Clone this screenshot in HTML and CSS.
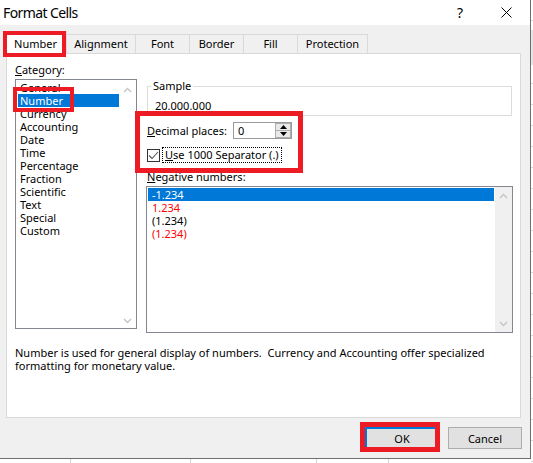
FILE: index.html
```html
<!DOCTYPE html>
<html>
<head>
<meta charset="utf-8">
<link rel="stylesheet" href="styles.css">
</head>
<body>
<div class="screen">
  <div class="dialog">
    <div class="titlebar">
      <span class="title">Format Cells</span>
      <span class="help">?</span>
      <span class="close"><svg width="11" height="11" viewBox="0 0 11 11"><path d="M0.5 0.5 L10.5 10.5 M10.5 0.5 L0.5 10.5" stroke="#000" stroke-width="1" fill="none"/></svg></span>
    </div>
    <div class="tabs">
      <div class="tab active">Number</div>
      <div class="tab">Alignment</div>
      <div class="tab">Font</div>
      <div class="tab">Border</div>
      <div class="tab">Fill</div>
      <div class="tab">Protection</div>
    </div>
    <div class="panel">
      <div class="cols">
        <div class="catcol">
          <div class="label"><u>C</u>ategory:</div>
          <div class="listbox cat">
            <ul class="items">
              <li>General</li>
              <li class="sel">Number</li>
              <li>Currency</li>
              <li>Accounting</li>
              <li>Date</li>
              <li>Time</li>
              <li>Percentage</li>
              <li>Fraction</li>
              <li>Scientific</li>
              <li>Text</li>
              <li>Special</li>
              <li>Custom</li>
            </ul>
            <div class="vscroll plain">
              <svg width="9" height="6" viewBox="0 0 9 6"><path d="M1 5 L4.5 1.5 L8 5" stroke="#c4c4c4" stroke-width="1.4" fill="none"/></svg>
              <svg width="9" height="6" viewBox="0 0 9 6"><path d="M1 1 L4.5 4.5 L8 1" stroke="#c4c4c4" stroke-width="1.4" fill="none"/></svg>
            </div>
          </div>
        </div>
        <div class="rightcol">
          <fieldset class="sample">
            <legend>Sample</legend>
            <div class="sampleval">20.000.000</div>
          </fieldset>
          <div class="decrow">
            <span class="declabel"><u>D</u>ecimal places:</span>
            <div class="spin">
              <span class="spinval">0</span>
              <div class="spinbtns">
                <span class="sb"><svg width="7" height="4" viewBox="0 0 7 4"><path d="M0 4 L3.5 0 L7 4 Z" fill="#000"/></svg></span>
                <span class="sb"><svg width="7" height="4" viewBox="0 0 7 4"><path d="M0 0 L3.5 4 L7 0 Z" fill="#000"/></svg></span>
              </div>
            </div>
          </div>
          <div class="checkrow">
            <span class="checkbox"><svg width="11" height="11" viewBox="0 0 11 11"><path d="M1 5.5 L4 8.5 L10 2" stroke="#555" stroke-width="1.1" fill="none"/></svg></span>
            <span class="checklabel"><u>U</u>se 1000 Separator (.)</span>
          </div>
          <div class="neglabel"><u>N</u>egative numbers:</div>
          <div class="listbox neg">
            <ul class="items">
              <li class="sel">-1.234</li>
              <li class="red">1.234</li>
              <li>(1.234)</li>
              <li class="red">(1.234)</li>
            </ul>
            <div class="vscroll">
              <svg width="9" height="6" viewBox="0 0 9 6"><path d="M1 5 L4.5 1.5 L8 5" stroke="#c4c4c4" stroke-width="1.4" fill="none"/></svg>
              <svg width="9" height="6" viewBox="0 0 9 6"><path d="M1 1 L4.5 4.5 L8 1" stroke="#c4c4c4" stroke-width="1.4" fill="none"/></svg>
            </div>
          </div>
        </div>
      </div>
      <p class="desc">Number is used for general display of numbers.&nbsp; Currency and Accounting offer specialized<br>formatting for monetary value.</p>
    </div>
    <div class="buttons">
      <button class="btn default">OK</button>
      <button class="btn">Cancel</button>
    </div>
  </div>
  <div class="mark mark-tab"></div>
  <div class="mark mark-cat"></div>
  <div class="mark mark-dec"></div>
  <div class="mark mark-ok"></div>
</div>
</body>
</html>
```

FILE: styles.css
```css
* { box-sizing: border-box; }
body {
  margin: 0;
  background: #fff;
  font-family: "Noto Sans", "Open Sans", sans-serif;
  font-size: 11px;
  color: #000;
}
.screen {
  position: relative;
  width: 533px;
  height: 463px;
  overflow: hidden;
  background-color: #fff;
  background-image:
    linear-gradient(#d4d4d4, #d4d4d4),
    linear-gradient(#d4d4d4, #d4d4d4),
    linear-gradient(#d4d4d4, #d4d4d4),
    linear-gradient(#d4d4d4, #d4d4d4),
    linear-gradient(#e6e6e6, #e6e6e6),
    repeating-linear-gradient(to bottom, transparent 0 20px, #dadada 20px 21px);
  background-position: 70px 0, 190px 0, 316px 0, 388px 0, 531px 30px, 531px 0;
  background-size: 1px 100%, 1px 100%, 1px 100%, 1px 100%, 2px 35px, 2px 100%;
  background-repeat: no-repeat;
}
.dialog {
  width: 531px;
  height: 459px;
  background: #f0f0f0;
  border-right: 1px solid #6e6e6e;
  border-bottom: 1px solid #6e6e6e;
  display: flex;
  flex-direction: column;
}
.titlebar {
  height: 25px;
  background: #fff;
  display: flex;
  align-items: center;
  padding-left: 3px;
}
.title { flex: 1; font-size: 14px; letter-spacing: -0.6px; }
.help, .close {
  width: 46px;
  text-align: center;
  display: flex;
  justify-content: center;
  align-items: center;
}
.help { font-size: 14px; }
.close { margin-right: 1px; }

.tabs {
  display: flex;
  align-items: flex-start;
  margin-top: 9px;
  padding-left: 4px;
  height: 19px;
  position: relative;
  z-index: 1;
}
.tab {
  height: 19px;
  border: 1px solid #d9d9d9;
  border-bottom: none;
  margin-left: -1px;
  padding: 0;
  text-align: center;
  line-height: 18px;
  background: #f0f0f0;
  white-space: nowrap;
}
.tab:first-child { margin-left: 0; width: 63px; }
.tab:nth-child(2) { width: 70px; }
.tab:nth-child(3) { width: 55px; }
.tab:nth-child(4) { width: 55px; }
.tab:nth-child(5) { width: 55px; }
.tab:nth-child(6) { width: 71px; }
.tab.active {
  background: #fff;
  margin-top: -3px;
  height: 23px;
  padding-top: 3px;
  border-color: #d9d9d9;
}
.panel {
  margin-left: 6px;
  width: 515px;
  height: 365px;
  border: 1px solid #d9d9d9;
  background: #fff;
  padding: 9px 0 0 8px;
}
.cols { display: flex; align-items: flex-start; }
.catcol { width: 122px; }
.label { line-height: 14px; height: 14px; margin-bottom: 2px; }
.listbox {
  border: 1px solid #828790;
  display: flex;
  background: #fff;
}
.listbox.cat { width: 122px; height: 250px; }
.items {
  list-style: none;
  margin: 0;
  flex: 1;
}
.cat .items { padding: 1px 0 0 2px; }
.items li {
  height: 13px;
  line-height: 13px;
  padding-left: 2px;
  white-space: nowrap;
}
.items li.sel { background: #0078d7; color: #fff; }
.items li.red { color: #ff0000; }
.vscroll {
  width: 17px;
  background: #f0f0f0;
  display: flex;
  flex-direction: column;
  justify-content: space-between;
  align-items: center;
  padding: 6px 0 5px;
}
.vscroll.plain { background: #fff; padding: 7px 0 4px; }

.rightcol {
  margin-left: 9px;
  width: 367px;
  padding-top: 16px;
}
.sample {
  margin: 0 1px;
  padding: 0 8px 2px 3px;
  border: 1px solid #dcdcdc;
  min-width: 0;
}
.sample legend {
  padding: 0 2px;
  line-height: 14px;
}
.sampleval {
  margin-top: 6px;
  padding-left: 4px;
  line-height: 14px;
}
.decrow {
  margin-top: 6px;
  display: flex;
  align-items: center;
  height: 17px;
  padding-left: 1px;
}
.declabel { width: 86px; }
.spin {
  width: 59px;
  height: 17px;
  border: 1px solid #9a9a9a;
  display: flex;
  background: #fff;
}
.spinval { flex: 1; padding-left: 4px; line-height: 15px; }
.spinbtns {
  width: 16px;
  display: flex;
  flex-direction: column;
}
.sb {
  flex: 1;
  border: 1px solid #adadad;
  background: #e9e9e9;
  display: flex;
  align-items: center;
  justify-content: center;
}
.sb + .sb { border-top: none; }
.checkrow {
  margin-top: 8px;
  height: 16px;
  display: flex;
  align-items: center;
  padding-left: 1px;
}
.checkbox {
  width: 13px;
  height: 13px;
  border: 1px solid #333;
  display: flex;
  align-items: center;
  justify-content: center;
  margin-right: 2px;
  background: #fff;
}
.checklabel {
  border: 1px dotted #000;
  padding: 0 2px;
  line-height: 14px;
}
.neglabel {
  margin-top: 7px;
  line-height: 14px;
  padding-left: 1px;
}
.listbox.neg {
  margin-top: 2px;
  width: 367px;
  height: 147px;
}
.neg .items { padding: 1px; }
.neg .items li { padding-left: 4px; }

.desc {
  margin: 13px 0 0 0;
  line-height: 13px;
  white-space: nowrap;
}
.buttons {
  margin-top: 9px;
  display: flex;
  justify-content: flex-end;
  gap: 9px;
  padding-right: 8px;
}
.btn {
  width: 74px;
  height: 22px;
  background: #e1e1e1;
  border: 1px solid #adadad;
  font-family: inherit;
  font-size: 11px;
  color: #000;
  padding: 0;
}
.btn.default { border: 2px solid #0078d7; }

.mark {
  position: absolute;
  z-index: 5;
  border: 4px solid #ed1c24;
}
.mark-tab { left: 3px; top: 31px; width: 63px; height: 26px; }
.mark-cat { left: 13px; top: 87px; width: 61px; height: 25px; }
.mark-dec { left: 135px; top: 111px; width: 168px; height: 62px; border-width: 5px; }
.mark-ok { left: 360px; top: 422px; width: 80px; height: 30px; border-width: 5px; }
```
